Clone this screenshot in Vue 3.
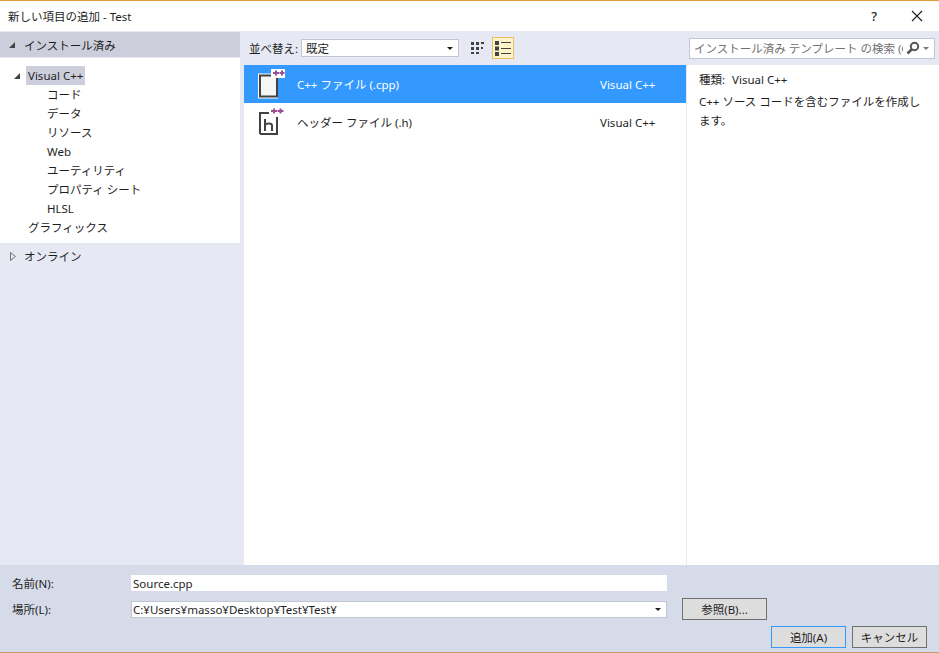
<script setup>
const children = ["コード", "データ", "リソース", "Web", "ユーティリティ", "プロパティ シート", "HLSL"];

const templates = [
  { name: "C++ ファイル (.cpp)", lang: "Visual C++", kind: "cpp", selected: true },
  { name: "ヘッダー ファイル (.h)", lang: "Visual C++", kind: "h", selected: false },
];
</script>

<template>
  <div class="dialog">
    <header class="titlebar">
      <span class="title">新しい項目の追加 - Test</span>
      <div class="title-actions">
        <span class="help">?</span>
        <svg class="close" width="12" height="12" viewBox="0 0 12 12">
          <path d="M1 1 11 11M11 1 1 11" stroke="#1e1e1e" stroke-width="1.1" fill="none" />
        </svg>
      </div>
    </header>

    <main class="main">
      <aside class="sidebar">
        <div class="side-head">
          <span class="tri-open"></span>
          <span>インストール済み</span>
        </div>
        <div class="tree">
          <div class="tree-root">
            <span class="tri-open"></span>
            <span class="root-label">Visual C++</span>
          </div>
          <div v-for="item in children" :key="item" class="tree-child">{{ item }}</div>
          <div class="tree-extra">グラフィックス</div>
        </div>
        <div class="side-online">
          <svg width="6" height="9" viewBox="0 0 6 9">
            <path d="M.5.5 5.5 4.5.5 8.5Z" fill="#e6e9f4" stroke="#717171" />
          </svg>
          <span>オンライン</span>
        </div>
      </aside>

      <section class="center">
        <div class="toolbar">
          <label class="sort-label">並べ替え:</label>
          <div class="sort-select">
            <span>既定</span>
            <span class="caret"></span>
          </div>
          <button class="view-btn">
            <svg width="14" height="14" viewBox="0 0 14 14" fill="#424242">
              <path d="M0 1h3v3H0zM5 1h3v3H5zM10 1h3v2h-3zM0 6h3v3H0zM5 6h3v3H5zM10 6h2v2h-2zM0 11h3v2H0zM5 11h3v2H5z" />
            </svg>
          </button>
          <button class="view-btn active">
            <svg width="16" height="15" viewBox="0 0 16 15" fill="#424242">
              <path d="M0 0h4v4H0zM0 5.500h4v4H0zM0 11h4v4H0zM6 1h10v1H6zM6 7h10v1H6zM6 12h10v1H6z" />
            </svg>
          </button>
        </div>
        <div class="list">
          <div
            v-for="tpl in templates"
            :key="tpl.kind"
            class="row"
            :class="{ selected: tpl.selected }"
          >
            <svg v-if="tpl.kind === 'cpp'" class="row-icon" width="28" height="30" viewBox="0 0 28 30">
              <path d="M1 4.500h15v2h5v23H1z" fill="#fff" />
              <path d="M3 6.500h17v21H3z" fill="#f6f6f6" stroke="#424242" stroke-width="2" />
              <path d="M14 0h14v9H14z" fill="#fff" />
              <path d="M16 4h6M19 1.500v5M22.500 4h5M25 1.500v5" stroke="#9b4f96" stroke-width="2" fill="none" />
            </svg>
            <svg v-else class="row-icon" width="28" height="30" viewBox="0 0 28 30">
              <path d="M2 5h15v2h3v21H2z" fill="#fff" />
              <path d="M3 27V6h9M20 10v17H3" stroke="#424242" stroke-width="2" fill="none" />
              <path d="M8 12v12M8 18c1-2 7-2.500 7 .500V24" stroke="#424242" stroke-width="2" fill="none" />
              <path d="M14 4h6M17 1.500v5M20.500 4h6M23.500 1.500v5" stroke="#9b4f96" stroke-width="2" fill="none" />
            </svg>
            <span class="row-name">{{ tpl.name }}</span>
            <span class="row-lang">{{ tpl.lang }}</span>
          </div>
        </div>
      </section>

      <section class="details">
        <div class="search-bar">
          <div class="search-box">
            <span class="search-hint">インストール済み テンプレート の検索 (Ctrl+E</span>
            <svg width="14" height="14" viewBox="0 0 14 14">
              <circle cx="8.500" cy="5.500" r="3.700" fill="none" stroke="#555" stroke-width="2" />
              <path d="M6 8 1.500 12.500" stroke="#555" stroke-width="2.600" />
            </svg>
            <span class="caret light"></span>
          </div>
        </div>
        <div class="info">
          <div class="info-type"><span>種類:</span><span>Visual C++</span></div>
          <p>C++ ソース コードを含むファイルを作成します。</p>
        </div>
      </section>
    </main>

    <footer class="footer">
      <div class="form-row">
        <label>名前(N):</label>
        <input class="name-input" value="Source.cpp" />
      </div>
      <div class="form-row">
        <label>場所(L):</label>
        <div class="path-select">
          <span>C:¥Users¥masso¥Desktop¥Test¥Test¥</span>
          <span class="caret"></span>
        </div>
        <button class="btn browse">参照(B)...</button>
      </div>
      <div class="actions">
        <button class="btn primary">追加(A)</button>
        <button class="btn">キャンセル</button>
      </div>
    </footer>
  </div>
</template>

<style scoped>
.dialog {
  width: 939px;
  height: 653px;
  display: flex;
  flex-direction: column;
  box-sizing: border-box;
  border-top: 1px solid #e59a3c;
  border-bottom: 1px solid #c99b68;
  background: #e6e9f4;
  color: #1e1e1e;
  font-family: "Noto Sans", "Noto Sans CJK JP", sans-serif;
  font-size: 11.500px;
  overflow: hidden;
}

.titlebar {
  height: 30px;
  flex: none;
  display: flex;
  align-items: center;
  justify-content: space-between;
  background: #fff;
  padding: 0 16px 0 8px;
}

.title-actions {
  display: flex;
  align-items: center;
  gap: 34px;
}

.help {
  font-size: 13px;
  font-weight: 500;
}

.close {
  display: block;
}

.main {
  flex: 1;
  min-height: 0;
  display: grid;
  grid-template-columns: 240px 446px 253px;
}

.sidebar {
  display: flex;
  flex-direction: column;
  padding-top: 1px;
}

.side-head {
  height: 25px;
  background: #cccedb;
  display: flex;
  align-items: center;
  gap: 9px;
  padding-left: 9px;
}

.tri-open {
  width: 0;
  height: 0;
  border-left: 6px solid transparent;
  border-bottom: 6px solid #444;
}

.tree {
  background: #fff;
  margin-top: 1px;
  height: 185px;
  padding-top: 8px;
  box-sizing: border-box;
}

.tree-root {
  display: flex;
  align-items: center;
  gap: 6px;
  height: 19px;
  padding-left: 14px;
}

.root-label {
  background: #cccedb;
  height: 19px;
  line-height: 19px;
  padding: 0 2px;
}

.tree-child,
.tree-extra {
  height: 19px;
  line-height: 19px;
  padding-left: 47px;
}

.tree-extra {
  padding-left: 28px;
}

.side-online {
  height: 26px;
  display: flex;
  align-items: center;
  gap: 8px;
  padding-left: 10px;
}

.center {
  display: flex;
  flex-direction: column;
  padding-left: 4px;
  min-height: 0;
}

.toolbar {
  height: 34px;
  flex: none;
  display: flex;
  align-items: center;
  gap: 3px;
  padding-left: 5px;
}

.sort-select {
  width: 158px;
  height: 18px;
  margin-left: 0;
  box-sizing: border-box;
  display: flex;
  align-items: center;
  justify-content: space-between;
  background: #fff;
  border: 1px solid #c2c6d4;
  padding: 0 5px 0 4px;
}

.caret {
  width: 0;
  height: 0;
  border-left: 3px solid transparent;
  border-right: 3px solid transparent;
  border-top: 3px solid #1e1e1e;
}

.caret.light {
  border-top-color: #777;
}

.view-btn {
  width: 22px;
  height: 22px;
  margin-left: 5px;
  padding: 0;
  border: 1px solid transparent;
  background: transparent;
  display: grid;
  place-items: center;
}

.view-btn + .view-btn {
  margin-left: 0;
}

.view-btn.active {
  background: #fef3c9;
  border-color: #e5c365;
}

.list {
  flex: 1;
  background: #fff;
}

.row {
  height: 38px;
  display: flex;
  align-items: center;
  padding-left: 13px;
}

.row.selected {
  background: #3399ff;
  color: #fff;
}

.row-icon {
  flex: none;
}

.row-name {
  margin-left: 12px;
  width: 303px;
}

.details {
  display: flex;
  flex-direction: column;
}

.search-bar {
  height: 34px;
  flex: none;
  display: flex;
  align-items: center;
  padding-left: 3px;
}

.search-box {
  width: 246px;
  height: 21px;
  box-sizing: border-box;
  display: flex;
  align-items: center;
  background: #fff;
  border: 1px solid #c2c6d4;
  padding: 0 5px 0 4px;
  gap: 3px;
}

.search-hint {
  flex: 1;
  color: #717171;
  white-space: nowrap;
  overflow: hidden;
}

.info {
  flex: 1;
  background: #fff;
  border-left: 1px solid #e6e9f4;
  padding: 5px 12px;
}

.info-type {
  display: flex;
  gap: 7px;
  line-height: 19px;
}

.info p {
  margin: 3px 0 0;
  line-height: 19px;
}

.footer {
  height: 87px;
  flex: none;
  box-sizing: border-box;
  background: #d6dbe9;
  padding: 5px 12px 0;
  display: flex;
  flex-direction: column;
}

.form-row {
  display: flex;
  align-items: center;
  height: 26px;
}

.form-row label {
  width: 119px;
  flex: none;
}

.name-input {
  width: 536px;
  height: 16px;
  box-sizing: border-box;
  border: none;
  padding: 0 2px;
  margin: 0;
  background: #fff;
  color: #1e1e1e;
  font: inherit;
}

.path-select {
  width: 536px;
  height: 17px;
  box-sizing: border-box;
  display: flex;
  align-items: center;
  justify-content: space-between;
  background: #fff;
  border: 1px solid #c2c6d4;
  padding: 0 5px 0 1px;
}

.btn {
  width: 75px;
  height: 22px;
  padding: 0;
  box-sizing: border-box;
  background: #dddddd;
  border: 1px solid #707070;
  color: #1e1e1e;
  font: inherit;
}

.browse {
  width: 85px;
  margin-left: 15px;
}

.actions {
  display: flex;
  justify-content: flex-end;
  gap: 6px;
  margin-top: 4px;
}

.primary {
  border-color: #3399ff;
}
</style>

<style>
body {
  margin: 0;
}
</style>
